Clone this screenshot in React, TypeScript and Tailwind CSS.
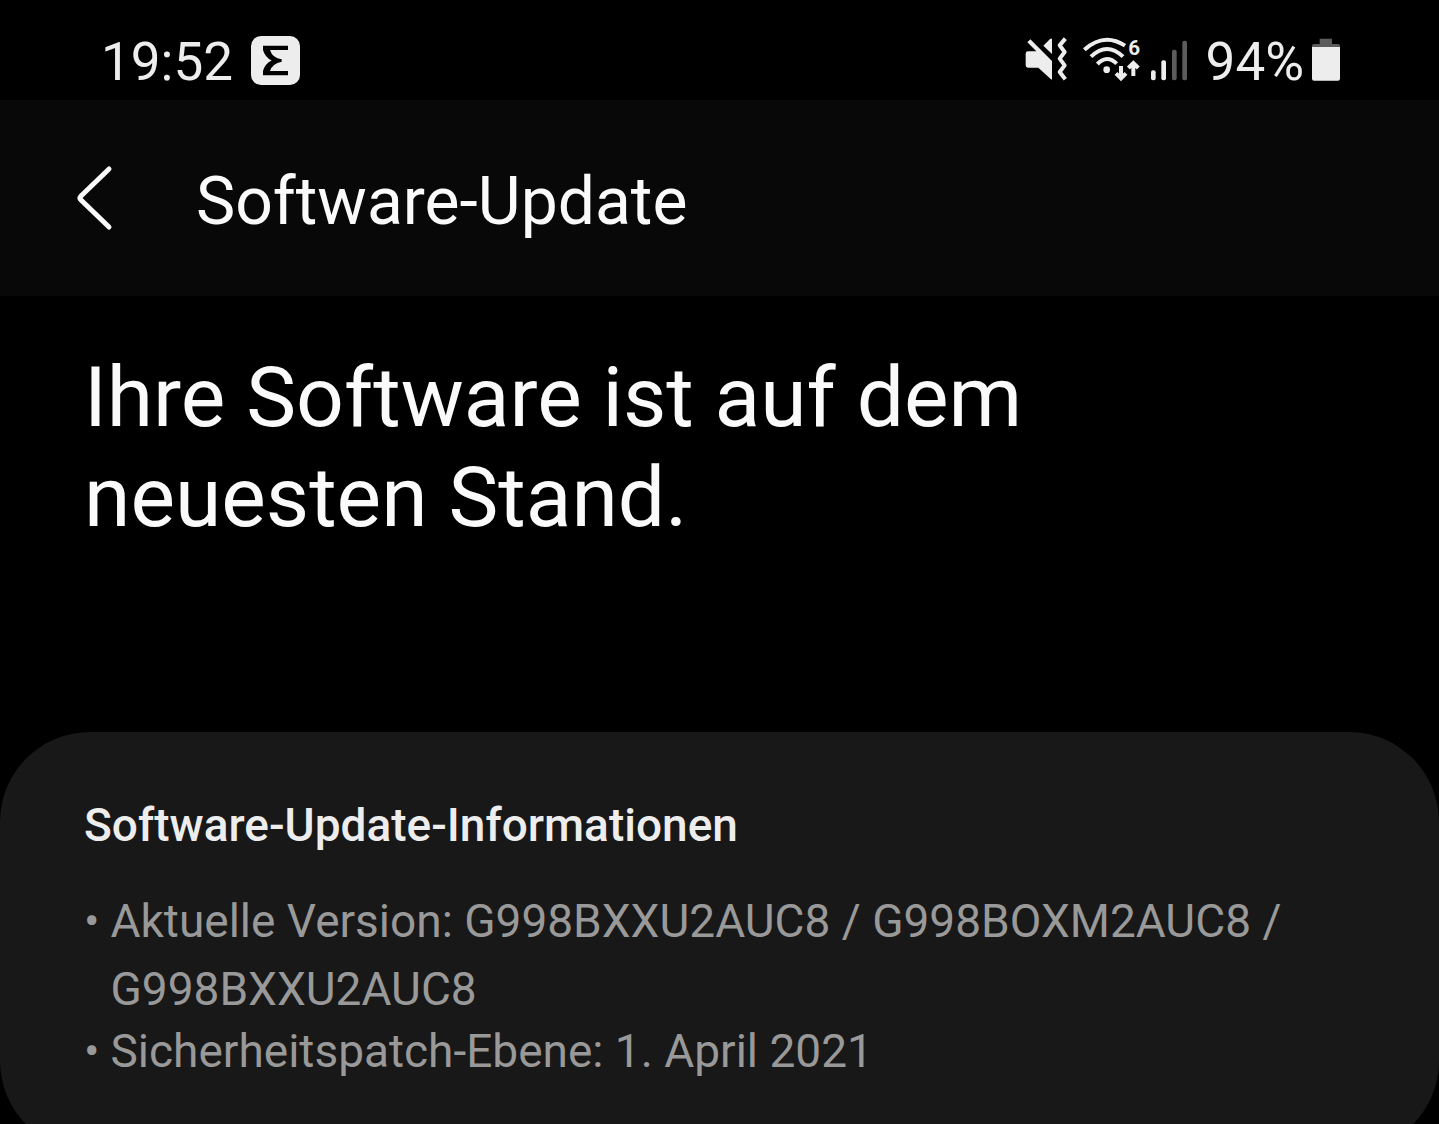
import React from "react";

const NotificationIcon = () => (
  <svg viewBox="0 0 147 147" className="h-[49px] w-[49px]" aria-hidden="true">
    <rect width="147" height="147" rx="30" fill="#ededed" />
    <path
      fill="#000"
      d="M36 29H111V42H57Q64 66 92 70V77Q64 82 57 105H111V118H36V105Q42 83 62 73.500Q42 64 36 42Z"
    />
  </svg>
);

const MuteIcon = () => (
  <svg viewBox="0 0 150 144" className="h-12 w-[50px]" aria-hidden="true">
    <path
      fill="#ededed"
      d="M16 19L25 10L90 75V128Q90 133 86 129L49 95H18Q11 95 11 88V53Q11 46 18 46H43ZM64 29L84 9Q90 5 90 11V54Z"
    />
    <path
      d="M130 8L113 28L128 48L113 68L128 88L113 108L130 130"
      fill="none"
      stroke="#ededed"
      strokeWidth="12"
      strokeLinejoin="round"
    />
  </svg>
);

const WifiIcon = () => (
  <svg viewBox="0 0 180 144" className="h-12 w-[60px]" aria-hidden="true">
    <g fill="none" stroke="#ededed" strokeWidth="12">
      <path d="M7 41Q67 -12 129 29" />
      <path d="M27 62Q75 16 123 62" />
      <path d="M46 84Q75 54 104 83" />
      <path d="M117 90V126M102 112L117 127L132 112" />
      <path d="M154 120V82M139 96L154 81L169 96" />
    </g>
    <circle cx="74" cy="101" r="10" fill="#ededed" />
    <text x="139" y="57" fill="#ededed" className="font-['Roboto',sans-serif] text-[62px] font-bold">
      6
    </text>
  </svg>
);

const SignalIcon = () => (
  <svg viewBox="0 0 120 144" className="h-12 w-10" aria-hidden="true">
    <rect x="9" y="103" width="14" height="30" rx="6" fill="#ededed" />
    <rect x="40" y="73" width="14" height="60" rx="6" fill="#ededed" />
    <rect x="72" y="41" width="14" height="92" rx="6" fill="#5c5c5c" />
    <rect x="103" y="14" width="14" height="119" rx="6" fill="#5c5c5c" />
  </svg>
);

const BatteryIcon = () => (
  <svg viewBox="0 0 84 144" className="h-12 w-7" aria-hidden="true">
    <path fill="#5c5c5c" d="M23 8H60V24H78Q84 24 84 30V40H0V30Q0 24 6 24H23Z" />
    <path fill="#ededed" d="M0 33H84V128Q84 134 78 134H6Q0 134 0 128Z" />
  </svg>
);

const StatusBar = () => (
  <div className="flex h-[100px] items-center justify-between pt-5 pr-[99px] pl-[101px] text-[53px] leading-[60px] text-[#ededed]">
    <div className="flex items-center gap-[18px]">
      <span className="pt-1">19:52</span>
      <NotificationIcon />
    </div>
    <div className="flex items-center">
      <MuteIcon />
      <div className="ml-[10px] flex items-center gap-[6px]">
        <WifiIcon />
        <SignalIcon />
      </div>
      <span className="mr-2 ml-[18px] pt-1">94%</span>
      <BatteryIcon />
    </div>
  </div>
);

const Header = () => (
  <header className="flex h-[196px] items-center gap-20 bg-[#080808] pl-[74px]">
    <button type="button" aria-label="Zurück">
      <svg viewBox="0 0 42 72" className="h-[72px] w-[42px]" fill="none">
        <path
          d="M35 7L7 34Q5 36 7 38L35 65"
          stroke="#fafafa"
          strokeWidth="5"
          strokeLinecap="round"
        />
      </svg>
    </button>
    <h1 className="pt-2 text-[66px] leading-[80px]">Software-Update</h1>
  </header>
);

const UpdateInfo = () => (
  <section className="rounded-[90px] bg-[#181818] px-[84px] pt-[59px] pb-[72px] text-[46px]">
    <h3 className="font-medium leading-[68px] text-[#ededed]">Software-Update-Informationen</h3>
    <ul className="mt-7 text-[#999]">
      <li className="flex gap-[11px] leading-[68px]">
        <span>•</span>
        <span>Aktuelle Version: G998BXXU2AUC8 / G998BOXM2AUC8 / G998BXXU2AUC8</span>
      </li>
      <li className="flex gap-[11px] leading-[56px]">
        <span>•</span>
        <span>Sicherheitspatch-Ebene: 1. April 2021</span>
      </li>
    </ul>
  </section>
);

const App = () => {
  return (
    <main className="h-screen overflow-hidden bg-black font-['Roboto',sans-serif] text-[#fafafa]">
      <StatusBar />
      <Header />
      <h2 className="max-w-[1120px] pt-[52px] pb-[184px] pl-[84px] text-[84px] leading-[100px]">
        Ihre Software ist auf dem neuesten Stand.
      </h2>
      <UpdateInfo />
    </main>
  );
};
export default App;
